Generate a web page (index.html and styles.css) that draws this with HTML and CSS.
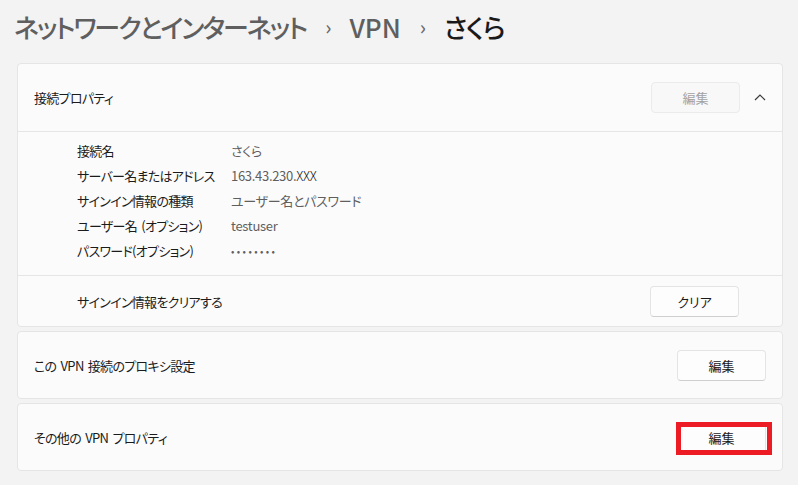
FILE: index.html
```html
<!DOCTYPE html>
<html lang="ja">
<head>
<meta charset="utf-8">
<title>VPN さくら</title>
<link rel="stylesheet" href="styles.css">
</head>
<body>
<div class="page">
  <h1 class="crumbs">
    <span class="crumb">ネットワークとインターネット</span>
    <span class="sep">›</span>
    <span class="crumb vpn">VPN</span>
    <span class="sep">›</span>
    <span class="crumb current">さくら</span>
  </h1>

  <section class="card">
    <div class="card-head">
      <span class="label">接続プロパティ</span>
      <div class="head-actions">
        <button class="btn disabled">編集</button>
        <svg class="chev" width="12" height="8" viewBox="0 0 12 8"><polyline points="1,7 6,2 11,7" fill="none" stroke="#3a3a3a" stroke-width="1.2"/></svg>
      </div>
    </div>
    <dl class="details">
      <div class="drow"><dt>接続名</dt><dd>さくら</dd></div>
      <div class="drow"><dt>サーバー名またはアドレス</dt><dd>163.43.230.<span class="dark">XXX</span></dd></div>
      <div class="drow"><dt>サインイン情報の種類</dt><dd>ユーザー名とパスワード</dd></div>
      <div class="drow"><dt>ユーザー名 (オプション)</dt><dd>testuser</dd></div>
      <div class="drow"><dt>パスワード(オプション)</dt><dd class="dots">••••••••</dd></div>
    </dl>
    <div class="clear-row">
      <span class="label">サインイン情報をクリアする</span>
      <button class="btn">クリア</button>
    </div>
  </section>

  <section class="card simple">
    <span class="label">この VPN 接続のプロキシ設定</span>
    <button class="btn">編集</button>
  </section>

  <section class="card simple">
    <span class="label">その他の VPN プロパティ</span>
    <div class="btn-wrap">
      <button class="btn">編集</button>
      <div class="mark"></div>
    </div>
  </section>
</div>
</body>
</html>
```

FILE: styles.css
```css
* { box-sizing: border-box; }
html, body { margin: 0; padding: 0; }
body {
  background: #f3f3f3;
  font-family: "Noto Sans CJK JP", "Noto Sans", sans-serif;
  font-feature-settings: "palt";
  color: #1b1b1b;
  font-size: 13px;
  letter-spacing: -0.7px;
  word-spacing: 2px;
  width: 798px;
  height: 485px;
  overflow: hidden;
}
.page {
  padding: 0 15px 0 17px;
  display: flex;
  flex-direction: column;
  gap: 4px;
}
.crumbs {
  margin: 0;
  height: 59px;
  display: flex;
  align-items: center;
  padding: 0 0 7px 0;
  margin-left: -3px;
  font-size: 26px;
  font-weight: 500;
  color: #5f5f5f;
  letter-spacing: -2px;
  word-spacing: 0;
}
.crumbs .sep {
  font-size: 20px;
  letter-spacing: 0;
  margin: 0 18px 0 19px;
  color: #6a6a6a;
}
.crumbs .vpn { letter-spacing: 0; }
.crumbs .current { color: #1a1a1a; letter-spacing: -1px; }

.card {
  background: #fbfbfb;
  border: 1px solid #e5e5e5;
  border-radius: 4px;
  width: 766px;
}
.card-head {
  height: 68px;
  border-bottom: 1px solid #e5e5e5;
  display: flex;
  align-items: center;
  justify-content: space-between;
  padding: 0 16px 0 16px;
}
.head-actions {
  display: flex;
  align-items: center;
  gap: 14px;
}
.chev { margin-top: -2px; }
.label { font-size: 13px; color: #1b1b1b; }

.btn {
  font-family: inherit;
  font-feature-settings: "palt";
  font-size: 13px;
  letter-spacing: 0;
  width: 89px;
  height: 31px;
  background: #fdfdfd;
  color: #1b1b1b;
  border: 1px solid #e4e4e4;
  border-bottom-color: #cfcfcf;
  border-radius: 4px;
  padding: 0;
}
.btn.disabled {
  color: #a3a3a3;
  background: #f8f8f8;
  border-color: #ebebeb;
}

.details {
  margin: 0;
  padding: 6px 0 12px 59px;
  border-bottom: 1px solid #e5e5e5;
}
.drow {
  display: flex;
  height: 25px;
  align-items: center;
}
.drow dt {
  width: 154px;
  font-size: 13px;
  color: #1b1b1b;
}
.drow dd {
  margin: 0;
  font-size: 13px;
  color: #5f5f5f;
  letter-spacing: -0.3px;
}
.drow dd .dark { color: #111; font-weight: 300; }
.drow dd.dots { font-size: 10px; letter-spacing: 2.4px; }

.clear-row {
  height: 50px;
  display: flex;
  align-items: center;
  justify-content: space-between;
  padding: 0 43px 0 59px;
}

.card.simple {
  height: 68px;
  display: flex;
  align-items: center;
  justify-content: space-between;
  padding: 0 16px 0 16px;
}
.btn-wrap {
  position: relative;
  display: flex;
}
.mark {
  position: absolute;
  left: -1px;
  top: 0;
  width: 96px;
  height: 33px;
  border: 5px solid #ed1c24;
  pointer-events: none;
}
```
